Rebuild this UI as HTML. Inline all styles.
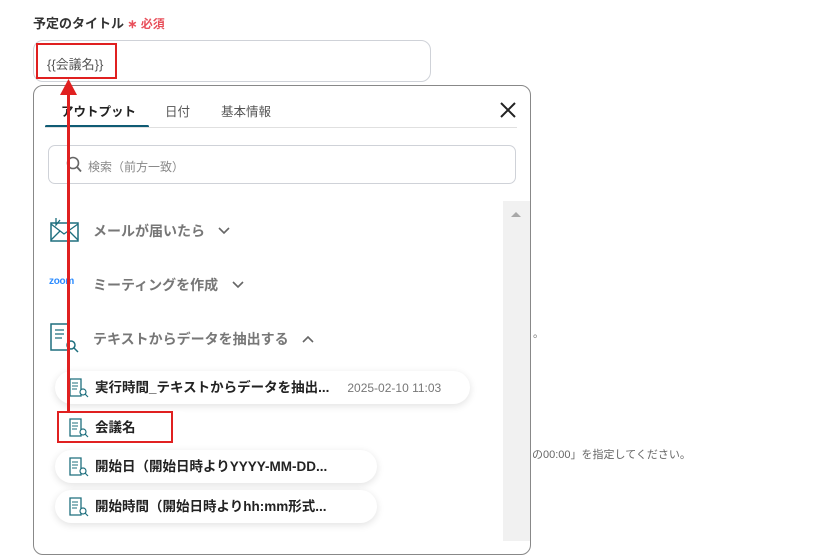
<!DOCTYPE html>
<html><head><meta charset="utf-8"><style>
body{margin:0;width:835px;height:540px;background:#fff;position:relative;overflow:hidden;font-family:"Liberation Sans","Noto Sans CJK JP",sans-serif;}
.a{position:absolute;}
.pill{position:absolute;left:55px;height:33px;background:#fff;border-radius:17px;box-shadow:0 2px 8px rgba(0,0,0,.12);font-size:13.5px;font-weight:bold;color:#222;line-height:33px;padding-left:40px;box-sizing:border-box;}
.ic{position:absolute;left:14px;top:7px;}
</style></head><body>
<div class="a" style="left:33px;top:13px;font-size:13px;font-weight:bold;color:#333;">予定のタイトル<span style="color:#e8505b;font-size:12px;"> ∗ 必須</span></div>
<div class="a" style="left:33px;top:40px;width:398px;height:42px;border:1px solid #cfd2d8;border-radius:10px;box-sizing:border-box;"></div>
<div class="a" style="left:47px;top:54px;font-size:13px;color:#555;">{{会議名}}</div>
<div class="a" style="left:36px;top:43px;width:81px;height:36px;border:2px solid #e02020;box-sizing:border-box;"></div>
<div class="a" style="left:533px;top:325px;font-size:11px;color:#777;">。</div>
<div class="a" style="left:532px;top:446px;font-size:11px;color:#666;">の00:00」を指定してください。</div>
<div class="a" style="left:33px;top:85px;width:498px;height:470px;border:1px solid #888;border-radius:10px;box-sizing:border-box;background:#fff;"></div>
<div class="a" style="left:61px;top:101px;font-size:12.5px;font-weight:bold;color:#222;">アウトプット</div>
<div class="a" style="left:165px;top:101px;font-size:12.5px;color:#555;">日付</div>
<div class="a" style="left:221px;top:101px;font-size:12.5px;color:#555;">基本情報</div>
<div class="a" style="left:45px;top:125px;width:104px;height:3px;background:#0f5b74;border-radius:2px;"></div>
<div class="a" style="left:45px;top:127px;width:472px;height:1px;background:#e0e0e0;"></div>
<svg class="a" style="left:499px;top:101px" width="18" height="18"><path d="M2 2L16 16M16 2L2 16" stroke="#222" stroke-width="2"/></svg>
<div class="a" style="left:48px;top:145px;width:468px;height:39px;border:1px solid #cfd2d8;border-radius:7px;box-sizing:border-box;"></div>
<svg class="a" style="left:66px;top:156px" width="16" height="17"><circle cx="7" cy="7" r="5.5" fill="none" stroke="#666" stroke-width="1.6"/><path d="M11 11L15 15.5" stroke="#666" stroke-width="1.8"/></svg>
<div class="a" style="left:88px;top:158px;font-size:12px;color:#888;">検索（前方一致）</div>
<div class="a" style="left:503px;top:201px;width:27px;height:340px;background:#f1f1f1;"></div>
<svg class="a" style="left:509px;top:209px" width="14" height="10"><path d="M2 8L7 3L12 8Z" fill="#a8a8a8"/></svg>
<svg class="a" style="left:50px;top:217px" width="30" height="26"><rect x="1" y="6" width="27" height="18" fill="none" stroke="#1e6f7e" stroke-width="1.5"/><path d="M1 7L14 17L28 7M1 23L10 14M28 23L19 14" fill="none" stroke="#1e6f7e" stroke-width="1.3"/><path d="M6 1L6 8L10 3" fill="none" stroke="#1e6f7e" stroke-width="1.3"/></svg>
<div class="a" style="left:93px;top:221px;font-size:14px;font-weight:bold;color:#777;">メールが届いたら</div>
<svg class="a" style="left:218px;top:227px" width="12" height="8"><path d="M1 1L6 6L11 1" fill="none" stroke="#666" stroke-width="1.6"/></svg>
<div class="a" style="left:49px;top:276px;font-size:10px;font-weight:bold;color:#2d8cff;letter-spacing:-.3px;">zoom</div>
<div class="a" style="left:93px;top:275px;font-size:14px;font-weight:bold;color:#777;">ミーティングを作成</div>
<svg class="a" style="left:232px;top:281px" width="12" height="8"><path d="M1 1L6 6L11 1" fill="none" stroke="#666" stroke-width="1.6"/></svg>
<svg class="a" style="left:50px;top:323px" width="30" height="30"><path d="M1 1H18V27H1Z" fill="none" stroke="#1e6f7e" stroke-width="1.5"/><path d="M5 7H14M5 11H14M5 15H12" stroke="#1e6f7e" stroke-width="1.3"/><circle cx="21" cy="22" r="4" fill="#fff" stroke="#1e6f7e" stroke-width="1.5"/><path d="M24 25L28 29" stroke="#1e6f7e" stroke-width="1.5"/></svg>
<div class="a" style="left:93px;top:329px;font-size:14px;font-weight:bold;color:#777;">テキストからデータを抽出する</div>
<svg class="a" style="left:302px;top:335px" width="12" height="8"><path d="M1 7L6 2L11 7" fill="none" stroke="#666" stroke-width="1.6"/></svg>
<div class="pill" style="top:371px;width:415px;">実行時間_テキストからデータを抽出...<span style="font-weight:normal;color:#777;font-size:12px;margin-left:18px;">2025-02-10 11:03</span><svg class="ic" width="20" height="20"><path d="M1 1H12V18H1Z" fill="none" stroke="#1e6f7e" stroke-width="1.3"/><path d="M3 5H9M3 8H9M3 11H8" stroke="#1e6f7e" stroke-width="1.1"/><circle cx="14" cy="14" r="3" fill="#fff" stroke="#1e6f7e" stroke-width="1.2"/><path d="M16 16L19 19" stroke="#1e6f7e" stroke-width="1.2"/></svg></div>
<div class="pill" style="top:411px;width:140px;box-shadow:none;">会議名<svg class="ic" width="20" height="20"><path d="M1 1H12V18H1Z" fill="none" stroke="#1e6f7e" stroke-width="1.3"/><path d="M3 5H9M3 8H9M3 11H8" stroke="#1e6f7e" stroke-width="1.1"/><circle cx="14" cy="14" r="3" fill="#fff" stroke="#1e6f7e" stroke-width="1.2"/><path d="M16 16L19 19" stroke="#1e6f7e" stroke-width="1.2"/></svg></div>
<div class="a" style="left:57px;top:411px;width:116px;height:32px;border:2px solid #e02020;box-sizing:border-box;"></div>
<div class="pill" style="top:450px;width:322px;">開始日（開始日時よりYYYY-MM-DD...<svg class="ic" width="20" height="20"><path d="M1 1H12V18H1Z" fill="none" stroke="#1e6f7e" stroke-width="1.3"/><path d="M3 5H9M3 8H9M3 11H8" stroke="#1e6f7e" stroke-width="1.1"/><circle cx="14" cy="14" r="3" fill="#fff" stroke="#1e6f7e" stroke-width="1.2"/><path d="M16 16L19 19" stroke="#1e6f7e" stroke-width="1.2"/></svg></div>
<div class="pill" style="top:490px;width:322px;">開始時間（開始日時よりhh:mm形式...<svg class="ic" width="20" height="20"><path d="M1 1H12V18H1Z" fill="none" stroke="#1e6f7e" stroke-width="1.3"/><path d="M3 5H9M3 8H9M3 11H8" stroke="#1e6f7e" stroke-width="1.1"/><circle cx="14" cy="14" r="3" fill="#fff" stroke="#1e6f7e" stroke-width="1.2"/><path d="M16 16L19 19" stroke="#1e6f7e" stroke-width="1.2"/></svg></div>
<div class="a" style="left:67px;top:92px;width:3px;height:320px;background:#e02020;"></div>
<svg class="a" style="left:60px;top:79px" width="17" height="16"><path d="M8.5 0L17 16H0Z" fill="#e02020"/></svg>
</body></html>
